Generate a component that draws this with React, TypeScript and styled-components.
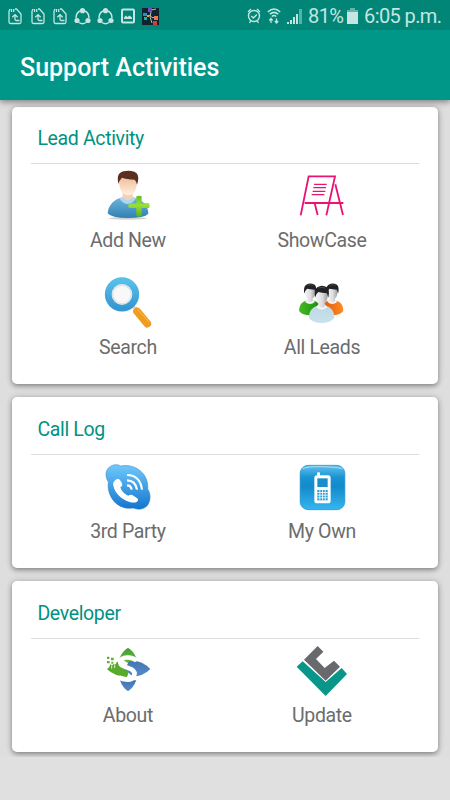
import React from 'react';
import styled, { createGlobalStyle } from 'styled-components';

const Global = createGlobalStyle`
  * { box-sizing: border-box; }
  body { margin: 0; background: #e0e0e0; font-family: Roboto, sans-serif; }
`;

const Screen = styled.div`
  width: 450px;
  height: 800px;
  overflow: hidden;
  display: flex;
  flex-direction: column;
  background: #e0e0e0;
`;

const StatusBar = styled.div`
  height: 30px;
  flex: none;
  background: #008577;
  color: #c4e5e1;
  display: flex;
  align-items: center;
  justify-content: space-between;
  padding: 2px 9px 0 4px;
  position: relative;
  z-index: 2;
`;

const Notifications = styled.div`
  display: grid;
  grid-template-columns: repeat(7, 22.5px);
  justify-items: center;
  align-items: center;
`;

const StatusGroup = styled.div<{ $gap: number }>`
  display: flex;
  align-items: center;
  gap: ${(p) => p.$gap}px;
`;

const StatusText = styled.span<{ $ml: number; $w: number }>`
  font-size: 20px;
  letter-spacing: -0.6px;
  line-height: 28px;
  margin-left: ${(p) => p.$ml}px;
  width: ${(p) => p.$w}px;
  white-space: nowrap;
`;

const AppBar = styled.header`
  height: 70px;
  flex: none;
  background: #009688;
  color: #fff;
  display: flex;
  align-items: center;
  padding: 5px 20px 0;
  position: relative;
  z-index: 1;
  box-shadow: 0 2px 6px rgba(0, 0, 0, 0.42);
`;

const Title = styled.h1`
  margin: 0;
  font-size: 25px;
  font-weight: 500;
  line-height: 32px;
`;

const Content = styled.main`
  height: 657px;
  flex: none;
  overflow: hidden;
  padding: 6.5px 12.5px 0 12.4px;
  display: flex;
  flex-direction: column;
  gap: 13px;
  background: #dedede;
`;

const Card = styled.section<{ $height: number }>`
  height: ${(p) => p.$height}px;
  flex: none;
  background: #fff;
  border-radius: 5px;
  padding: 18.5px 18.5px 0;
  box-shadow: 0 2px 5px rgba(0, 0, 0, 0.36), 0 0 9px rgba(0, 0, 0, 0.12);
`;

const CardTitle = styled.h2`
  margin: 0;
  height: 39px;
  padding-left: 6.5px;
  font-size: 19.5px;
  letter-spacing: -0.35px;
  font-weight: 400;
  line-height: 28px;
  color: #009284;
  border-bottom: 1px solid #dcdcdc;
`;

const Grid = styled.div`
  display: grid;
  grid-template-columns: 1fr 1fr;
  grid-auto-rows: 107px;
  padding-top: 7px;
`;

const Item = styled.div`
  display: flex;
  flex-direction: column;
  align-items: center;
  gap: 8px;
`;

const Label = styled.span`
  font-size: 19.5px;
  letter-spacing: -0.35px;
  line-height: 28px;
  color: #6c6c6c;
`;

const Icon = styled.svg`
  width: 48px;
  height: 48px;
  display: block;
  overflow: visible;
`;

const Glyph = styled.svg`
  display: block;
  flex: none;
  overflow: visible;
`;

const AddUserIcon = () => (
  <Icon viewBox="57 33 144 144">
    <defs>
      <linearGradient id="body" x2="0" y2="1"><stop stopColor="#72b7df" /><stop offset="1" stopColor="#3181b1" /></linearGradient>
      <linearGradient id="face" x2="0" y2="1"><stop stopColor="#eebd97" /><stop offset="1" stopColor="#fff0df" /></linearGradient>
      <linearGradient id="plus" x2="0" y2="1"><stop stopColor="#62bf1c" /><stop offset=".45" stopColor="#9adf36" /><stop offset="1" stopColor="#58b315" /></linearGradient>
    </defs>
    <ellipse cx="128" cy="175" rx="58" ry="4" fill="#777" opacity=".35" />
    <path d="M68 160C70 139 82 123 103 115Q130 104 153 115C178 123 189 140 190 161Q178 174 128 174Q78 174 68 160Z" fill="url(#body)" />
    <path d="M103 114Q127 107 153 114Q145 131 128 132Q111 131 103 114Z" fill="#a9d8f4" />
    <path d="M113 96H143V114Q129 127 113 114Z" fill="#f4d0b2" />
    <path d="M103 58Q128 42 155 58Q158 81 147 98Q130 113 111 98Q100 79 103 58Z" fill="url(#face)" />
    <path d="M100 72Q95 45 105 39Q115 31 139 33Q160 36 160 54Q159 66 156 74Q154 64 149 59Q124 58 111 53Q103 61 100 72Z" fill="#5a2e20" />
    <path d="M154 109Q162 105 170 109V130H192Q196 137 192 144H170V168Q162 173 154 168V144H132Q128 137 132 130H154Z" fill="url(#plus)" />
  </Icon>
);

const BoardIcon = () => (
  <Icon viewBox="84 33 144 144" fill="none" stroke="#e91471" strokeWidth="5.5">
    <path d="M92 166L116 49H195L169 166M104 129H220M134 130L143 165M196 73L219 165" />
    <path d="M132 73H170M130 83H168M128 94H166M125 104H163" strokeWidth="4" />
  </Icon>
);

const SearchIcon = () => (
  <Icon viewBox="57 24 144 144">
    <defs>
      <linearGradient id="ring" x2="0" y2="1"><stop stopColor="#58bfea" /><stop offset="1" stopColor="#3597d2" /></linearGradient>
    </defs>
    <path d="M141 106L152 117" stroke="#d8d8d8" strokeWidth="10" />
    <path d="M156 124L187 161" stroke="#f09c20" strokeWidth="23" strokeLinecap="round" />
    <path d="M158 118L190 154" stroke="#ffc044" strokeWidth="3" />
    <circle cx="111" cy="73" r="41" fill="#f8f8f8" stroke="url(#ring)" strokeWidth="21" />
    <circle cx="111" cy="73" r="28.5" fill="none" stroke="#dfe3e5" strokeWidth="5" />
  </Icon>
);

const Person = ({ fill }: { fill: string }) => (
  <>
    <path d="M-38 63C-38 39-27 30-11 26H11C27 30 38 39 38 63Q26 78 0 78Q-27 78-38 63Z" fill={fill} />
    <path d="M-17 31L-9 21H9L17 31Q0 45-17 31Z" fill="#f4f4f4" />
    <path d="M-19-14Q-18-25 0-25T19-14Q19 12 9 20V28Q0 36-9 28V20Q-20 11-19-14Z" fill="url(#skin)" />
    <path d="M-20 2Q-24-22-13-29Q1-38 16-29Q25-22 20 2L16-11Q0-13-10-15Q-17-10-20 2Z" fill="#202225" />
    <path d="M-9-27Q1-31 11-27" fill="none" stroke="#595b5d" strokeWidth="2" />
  </>
);

const LeadsIcon = () => (
  <Icon viewBox="84 24 144 144">
    <defs>
      <linearGradient id="skin"><stop stopColor="#f6f6f6" /><stop offset=".55" stopColor="#dedede" /><stop offset="1" stopColor="#999" /></linearGradient>
      <linearGradient id="green"><stop stopColor="#48ba27" /><stop offset="1" stopColor="#188b09" /></linearGradient>
      <linearGradient id="orange"><stop stopColor="#de5507" /><stop offset="1" stopColor="#ff8b22" /></linearGradient>
      <linearGradient id="pale" x2="0" y2="1"><stop stopColor="#bfd7e1" /><stop offset="1" stopColor="#c8e2ef" /></linearGradient>
    </defs>
    <g transform="translate(120 69) scale(.86)"><Person fill="url(#green)" /></g>
    <g transform="translate(187 69) scale(.86)"><Person fill="url(#orange)" /></g>
    <g transform="translate(155 81)"><Person fill="url(#pale)" /></g>
  </Icon>
);

const CallIcon = () => (
  <Icon viewBox="57 18 144 144">
    <defs><linearGradient id="call" x2="0" y2="1"><stop stopColor="#70c9fb" /><stop offset="1" stopColor="#1475cf" /></linearGradient></defs>
    <path d="M70 78C61 64 60 46 71 35C83 24 98 24 107 30C154 21 193 57 188 99C200 116 196 139 185 151C173 162 155 161 145 156C97 164 64 121 70 78Z" fill="url(#call)" stroke="#347fc1" strokeWidth="1.5" />
    <path d="M90 73Q98 65 104 71Q111 78 112 86Q112 91 106 94C109 106 118 114 130 119Q136 114 142 117L157 127Q162 132 155 138Q145 142 132 137C110 130 90 112 85 89Q83 79 90 73Z" fill="#fff" />
    <g fill="none" stroke="#fff" strokeWidth="6.5"><path d="M126 88Q138 88 140 101M126 73Q151 73 156 101M126 57Q165 57 171 101" /></g>
  </Icon>
);

const PhoneIcon = () => (
  <Icon viewBox="84 18 144 144">
    <defs><linearGradient id="phone" x2="0" y2="1"><stop stopColor="#64c2ee" /><stop offset=".27" stopColor="#1993d2" /><stop offset=".48" stopColor="#128bcc" /><stop offset="1" stopColor="#36b6ef" /></linearGradient></defs>
    <rect x="90.5" y="28" width="134" height="133" rx="24" fill="url(#phone)" stroke="#168bc9" strokeWidth="2" />
    <path d="M98 38Q112 31 156 32T217 38" fill="none" stroke="#a5def6" strokeWidth="3" />
    <rect x="141" y="49" width="9" height="20" rx="3" fill="#fff" />
    <rect x="133" y="58" width="49" height="84" rx="8" fill="#fff" />
    <rect x="142" y="67" width="31" height="26" fill="#188fcd" />
    <rect x="142" y="102" width="31" height="31" fill="#269dd8" />
    <path d="M149.5 102V133M157.5 102V133M165.5 102V133M142 109.5H173M142 117.5H173M142 125.5H173" stroke="#fff" strokeWidth="2.5" />
  </Icon>
);

const AboutIcon = () => (
  <Icon viewBox="57 30 144 144">
    <defs>
      <linearGradient id="leaf" x2="0" y2="1"><stop stopColor="#3d9e3b" /><stop offset="1" stopColor="#72b92c" /></linearGradient>
      <linearGradient id="blue" x2="0" y2="1"><stop stopColor="#4375b4" /><stop offset="1" stopColor="#568bc8" /></linearGradient>
    </defs>
    <path d="M104 66Q112 45 129 35Q146 45 154 66L130 82Z" fill="url(#leaf)" />
    <path d="M66 100Q75 92 76 85Q82 90 86 84Q92 89 95 78Q102 76 110 78L134 101L126 123Q90 122 66 100Z" fill="#58aa2b" />
    <path d="M132 76Q168 69 196 99Q175 121 142 122L120 98Z" fill="url(#blue)" />
    <path d="M105 133H154Q145 156 129 166Q113 156 105 133Z" fill="url(#blue)" />
    <path d="M155 74C140 60 109 62 106 77C104 92 125 92 139 100C157 111 146 132 127 131Q113 131 101 124" fill="none" stroke="#fff" strokeWidth="14" />
    <g fill="#66ad32"><path d="M66 62h7v7h-7zM78 65h8v8h-8zM66 75h8v7h-8zM79 77h6v6h-6z" /></g>
    <path d="M80 88v10M89 87v9" stroke="#d9edc9" strokeWidth="3" />
  </Icon>
);

const UpdateIcon = () => (
  <Icon viewBox="84 30 144 144">
    <path d="M80 92L98 76L167 138L215 96L231 114L167 180Z" fill="#079688" />
    <path d="M102 71L143 30L160 47L138 69L164 96L192 74L210 92L167 134Z" fill="#68696d" />
  </Icon>
);

const FileGlyph = () => (
  <Glyph width="14" height="17" viewBox="0 0 14 17" fill="none" stroke="currentColor" strokeWidth="1.3">
    <path d="M1 3V14Q1 15.5 2.5 15.5H11.5Q13 15.5 13 14V6L8.5 1H7M1 3L2 1M3.5 1V4M5.7 1V4M11.5 12.5H8.5Q7 12.5 7 11V7M4.3 9.3L7 6.6L9.7 9.3" />
  </Glyph>
);

const ShareGlyph = () => (
  <Glyph width="17" height="17" viewBox="0 0 17 17">
    <path d="M6 3Q2 5 2 10M11 3Q15 5 15 10M5 14.5Q8.5 17 12 14.5" fill="none" stroke="currentColor" strokeWidth="1.5" />
    <circle cx="8.5" cy="2.7" r="2.6" fill="currentColor" /><circle cx="3" cy="12.5" r="2.6" fill="currentColor" /><circle cx="14" cy="12.5" r="2.6" fill="currentColor" />
  </Glyph>
);

const PictureGlyph = () => (
  <Glyph width="14" height="16" viewBox="0 0 14 16">
    <rect x="1" y="1.5" width="12" height="13" rx="1" fill="none" stroke="currentColor" strokeWidth="2" />
    <path d="M3 11V9.5L5 7.5L6.5 9L8.5 7.5L11 9.5V11Z" fill="currentColor" />
  </Glyph>
);

const AppGlyph = () => (
  <Glyph width="17" height="17" viewBox="0 0 17 17">
    <rect width="17" height="17" fill="#11242e" />
    <path d="M9 2L14 1M7 7L11 10L13 8M9 4L8 9L10 15" fill="none" stroke="#b5bdc2" />
    <path d="M6 0h4v4H6z" fill="#7749cc" /><path d="M1 5h4v3H1z" fill="#2395c5" /><path d="M2 9h3v3H2z" fill="#17b4a0" /><path d="M12 8h4v4h-4z" fill="#eb7652" /><path d="M11 13h4v4h-4z" fill="#c94145" /><path d="M5 7h2v2H5z" fill="#d8ae37" />
  </Glyph>
);

const AlarmGlyph = () => (
  <Glyph width="14" height="16" viewBox="0 0 14 16" fill="none" stroke="currentColor" strokeWidth="1.4">
    <circle cx="7" cy="8" r="5.5" /><path d="M1 4L4 1M10 1L13 4M2.5 15L4 12.5M11.5 15L10 12.5M4.3 8L6.4 10L9.8 6.5" />
  </Glyph>
);

const WifiGlyph = () => (
  <Glyph width="14" height="16" viewBox="0 0 14 16">
    <path d="M.8 4Q7-2 13.2 4M2.8 6.3Q7 2.5 11.2 6.3M4.8 8.5Q7 6.7 9.2 8.5" fill="none" stroke="currentColor" strokeWidth="1.5" />
    <path d="M4 10.5V15M2.3 12.5L4 10.5L5.7 12.5M9.5 10.5V15M7.8 13L9.5 15L11.2 13" fill="none" stroke="currentColor" strokeWidth="1.3" />
  </Glyph>
);

const SignalGlyph = () => (
  <Glyph width="16" height="16" viewBox="0 0 16 16">
    <path d="M0 14h2v2H0zM3 12h2v4H3zM6 9h2v7H6zM9 6h2v10H9z" fill="currentColor" />
    <path d="M12 1h3v15h-3z" fill="currentColor" opacity=".45" />
  </Glyph>
);

const BatteryGlyph = () => (
  <Glyph width="11" height="16" viewBox="0 0 11 16">
    <path d="M3 0H8V2H11V4H0V2H3Z" fill="currentColor" opacity=".5" /><path d="M0 4H11V16H0Z" fill="currentColor" />
  </Glyph>
);

type Entry = { label: string; icon: () => React.JSX.Element };

const sections: { title: string; height: number; items: Entry[] }[] = [
  { title: 'Lead Activity', height: 277.5, items: [
    { label: 'Add New', icon: AddUserIcon },
    { label: 'ShowCase', icon: BoardIcon },
    { label: 'Search', icon: SearchIcon },
    { label: 'All Leads', icon: LeadsIcon },
  ] },
  { title: 'Call Log', height: 171, items: [
    { label: '3rd Party', icon: CallIcon },
    { label: 'My Own', icon: PhoneIcon },
  ] },
  { title: 'Developer', height: 171, items: [
    { label: 'About', icon: AboutIcon },
    { label: 'Update', icon: UpdateIcon },
  ] },
];

export default function App() {
  return (
    <Screen>
      <Global />
      <StatusBar>
        <Notifications>
          <FileGlyph /><FileGlyph /><FileGlyph />
          <ShareGlyph /><ShareGlyph /><PictureGlyph /><AppGlyph />
        </Notifications>
        <StatusGroup $gap={0}>
          <StatusGroup $gap={6}><AlarmGlyph /><WifiGlyph /><SignalGlyph /></StatusGroup>
          <StatusText $ml={5} $w={39}>81%</StatusText>
          <BatteryGlyph />
          <StatusText $ml={6} $w={77}>6:05 p.m.</StatusText>
        </StatusGroup>
      </StatusBar>
      <AppBar><Title>Support Activities</Title></AppBar>
      <Content>
        {sections.map((section) => (
          <Card key={section.title} $height={section.height}>
            <CardTitle>{section.title}</CardTitle>
            <Grid>
              {section.items.map(({ label, icon: Drawing }) => (
                <Item key={label}><Drawing /><Label>{label}</Label></Item>
              ))}
            </Grid>
          </Card>
        ))}
      </Content>
    </Screen>
  );
}
